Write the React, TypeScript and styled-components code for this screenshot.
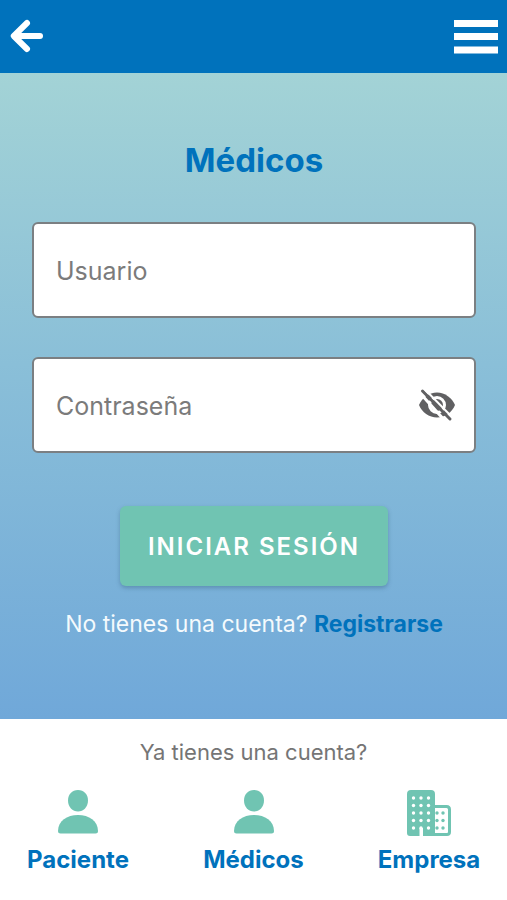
import React, { useState } from "react";
import styled, { createGlobalStyle } from "styled-components";

const GlobalStyle = createGlobalStyle`
  *, *::before, *::after { box-sizing: border-box; }
  body {
    margin: 0;
    background: #fff;
    font-family: Inter, "Liberation Sans", sans-serif;
  }
  button, input { font-family: inherit; }
`;

const blue = "#0072bc";
const green = "#70c4b2";

const Page = styled.div`
  display: flex;
  flex-direction: column;
  min-height: 100vh;
`;

const TopBar = styled.header`
  display: flex;
  justify-content: space-between;
  align-items: center;
  height: 73px;
  padding: 0 8px 2px;
  background: ${blue};
`;

const IconButton = styled.button`
  display: flex;
  padding: 0;
  border: 0;
  background: none;
  color: inherit;
  cursor: pointer;
`;

const BarButton = styled(IconButton)`
  color: #fff;
`;

const Main = styled.main`
  flex: 1;
  display: flex;
  flex-direction: column;
  align-items: center;
  padding: 63px 31px 0 32px;
  background: linear-gradient(#a3d3d6, #8abfd8 45%, #70a8d9);
`;

const Title = styled.h1`
  margin: 0 0 38px;
  font-size: 33px;
  line-height: 48px;
  font-weight: 700;
  color: ${blue};
`;

const Form = styled.form`
  display: flex;
  flex-direction: column;
  align-items: center;
  gap: 39px;
  width: 100%;
`;

const Field = styled.label`
  display: flex;
  align-items: center;
  width: 100%;
  height: 96px;
  padding: 0 18px 0 22px;
  border: 2px solid #7b7f82;
  border-radius: 6px;
  background: #fff;
  color: #606062;
`;

const TextInput = styled.input`
  flex: 1;
  min-width: 0;
  height: 100%;
  padding: 2px 0 0;
  border: 0;
  outline: 0;
  background: transparent;
  font-size: 25px;
  color: #555;
  &::placeholder { color: #7b7b7b; opacity: 1; }
`;

const Submit = styled.button`
  height: 80px;
  margin-top: 14px;
  padding: 0 28px;
  border: 0;
  border-radius: 6px;
  background: ${green};
  box-shadow: 0 2px 4px rgba(40, 80, 110, 0.35);
  color: #fff;
  font-size: 24px;
  font-weight: 600;
  letter-spacing: 2px;
  text-transform: uppercase;
  cursor: pointer;
`;

const Prompt = styled.p`
  margin: 21px 0 0;
  font-size: 23px;
  line-height: 34px;
  color: #f4fafd;
`;

const PromptLink = styled.a`
  font-weight: 700;
  color: ${blue};
  text-decoration: none;
`;

const Footer = styled.footer`
  height: 181px;
  padding-top: 16px;
  background: #fff;
`;

const FooterText = styled.p`
  margin: 0 0 21px;
  font-size: 22px;
  line-height: 34px;
  text-align: center;
  color: #757575;
`;

const Accounts = styled.nav`
  display: flex;
  justify-content: space-between;
  padding: 0 26px;
`;

const Account = styled.a`
  display: flex;
  flex-direction: column;
  align-items: center;
  gap: 8px;
  width: 104px;
  color: ${blue};
  font-size: 24px;
  line-height: 32px;
  font-weight: 700;
  text-decoration: none;
`;

const BackIcon = () => (
  <svg width="36" height="36" viewBox="0 0 36 36" fill="none" stroke="#fff" strokeWidth="6" strokeLinecap="round" strokeLinejoin="round" aria-hidden="true">
    <path d="M19 5 5.800 18 19 31" />
    <path d="M7 18H32" />
  </svg>
);

const MenuIcon = () => (
  <svg width="46" height="36" viewBox="0 0 46 36" fill="#fff" aria-hidden="true">
    <path d="M1 2h44v7H1zM1 15h44v7H1zM1 28.500h44v7H1z" />
  </svg>
);

const EyeOffIcon = () => (
  <svg width="38" height="34" viewBox="0 0 38 34" aria-hidden="true">
    <path d="M1 17C4 10 11 4.500 19 4.500s15 5.500 18 12.500C34 24.500 27 29.500 19 29.500S4 24.500 1 17Z" fill="currentColor" />
    <circle cx="19" cy="17" r="7.500" fill="currentColor" stroke="#fff" strokeWidth="3" />
    <path d="M1.500 4.500 28 34" fill="none" stroke="#fff" strokeWidth="3" />
    <path d="M4.500 3 32 31" fill="none" stroke="currentColor" strokeWidth="3" strokeLinecap="round" />
    <path d="M7 1.500 34 29" fill="none" stroke="#fff" strokeWidth="2" />
  </svg>
);

const PersonIcon = () => (
  <svg width="42" height="46" viewBox="0 0 42 46" fill={green} aria-hidden="true">
    <path d="M21 0C27 0 31 4.200 31 10.500C31 17 26.500 21.500 21 21.500S11 17 11 10.500C11 4.200 15 0 21 0Z" />
    <path d="M1 41C1 31 10 25 21 25s20 6 20 16q0 2.500-2.500 2.500h-35Q1 43.500 1 41Z" />
  </svg>
);

const towerDots = [8, 15.5, 23, 30.5, 38].flatMap((y) => [6.5, 14, 21.5].map((x) => [x, y]));
const annexDots = [23, 30.5, 38].flatMap((y) => [30, 36].map((x) => [x, y]));

const BuildingIcon = () => (
  <svg width="44" height="46" viewBox="0 0 44 46" aria-hidden="true">
    <path d="M4 0H24Q28 0 28 4V46H16V38H12.500V46H3Q0 46 0 43V4Q0 0 4 0Z" fill={green} />
    <path d="M27 16.500H39.500Q42.500 16.500 42.500 19.500V42Q42.500 44.500 40 44.500H27" fill="none" stroke={green} strokeWidth="3" />
    {towerDots.map(([x, y]) => <circle key={`${x}-${y}`} cx={x} cy={y} r="1.700" fill="#fff" />)}
    {annexDots.map(([x, y]) => <circle key={`${x}-${y}`} cx={x} cy={y} r="1.700" fill={green} />)}
  </svg>
);

export default function App() {
  const [visible, setVisible] = useState(false);
  return (
    <Page>
      <GlobalStyle />
      <TopBar>
        <BarButton type="button" aria-label="Volver"><BackIcon /></BarButton>
        <BarButton type="button" aria-label="Menú"><MenuIcon /></BarButton>
      </TopBar>
      <Main>
        <Title>Médicos</Title>
        <Form onSubmit={(e) => e.preventDefault()}>
          <Field>
            <TextInput type="text" placeholder="Usuario" aria-label="Usuario" />
          </Field>
          <Field>
            <TextInput type={visible ? "text" : "password"} placeholder="Contraseña" aria-label="Contraseña" />
            <IconButton type="button" aria-label="Mostrar contraseña" onClick={() => setVisible(!visible)}>
              <EyeOffIcon />
            </IconButton>
          </Field>
          <Submit type="submit">Iniciar sesión</Submit>
        </Form>
        <Prompt>
          No tienes una cuenta? <PromptLink href="#registro">Registrarse</PromptLink>
        </Prompt>
      </Main>
      <Footer>
        <FooterText>Ya tienes una cuenta?</FooterText>
        <Accounts>
          <Account href="#paciente"><PersonIcon />Paciente</Account>
          <Account href="#medicos"><PersonIcon />Médicos</Account>
          <Account href="#empresa"><BuildingIcon />Empresa</Account>
        </Accounts>
      </Footer>
    </Page>
  );
}
